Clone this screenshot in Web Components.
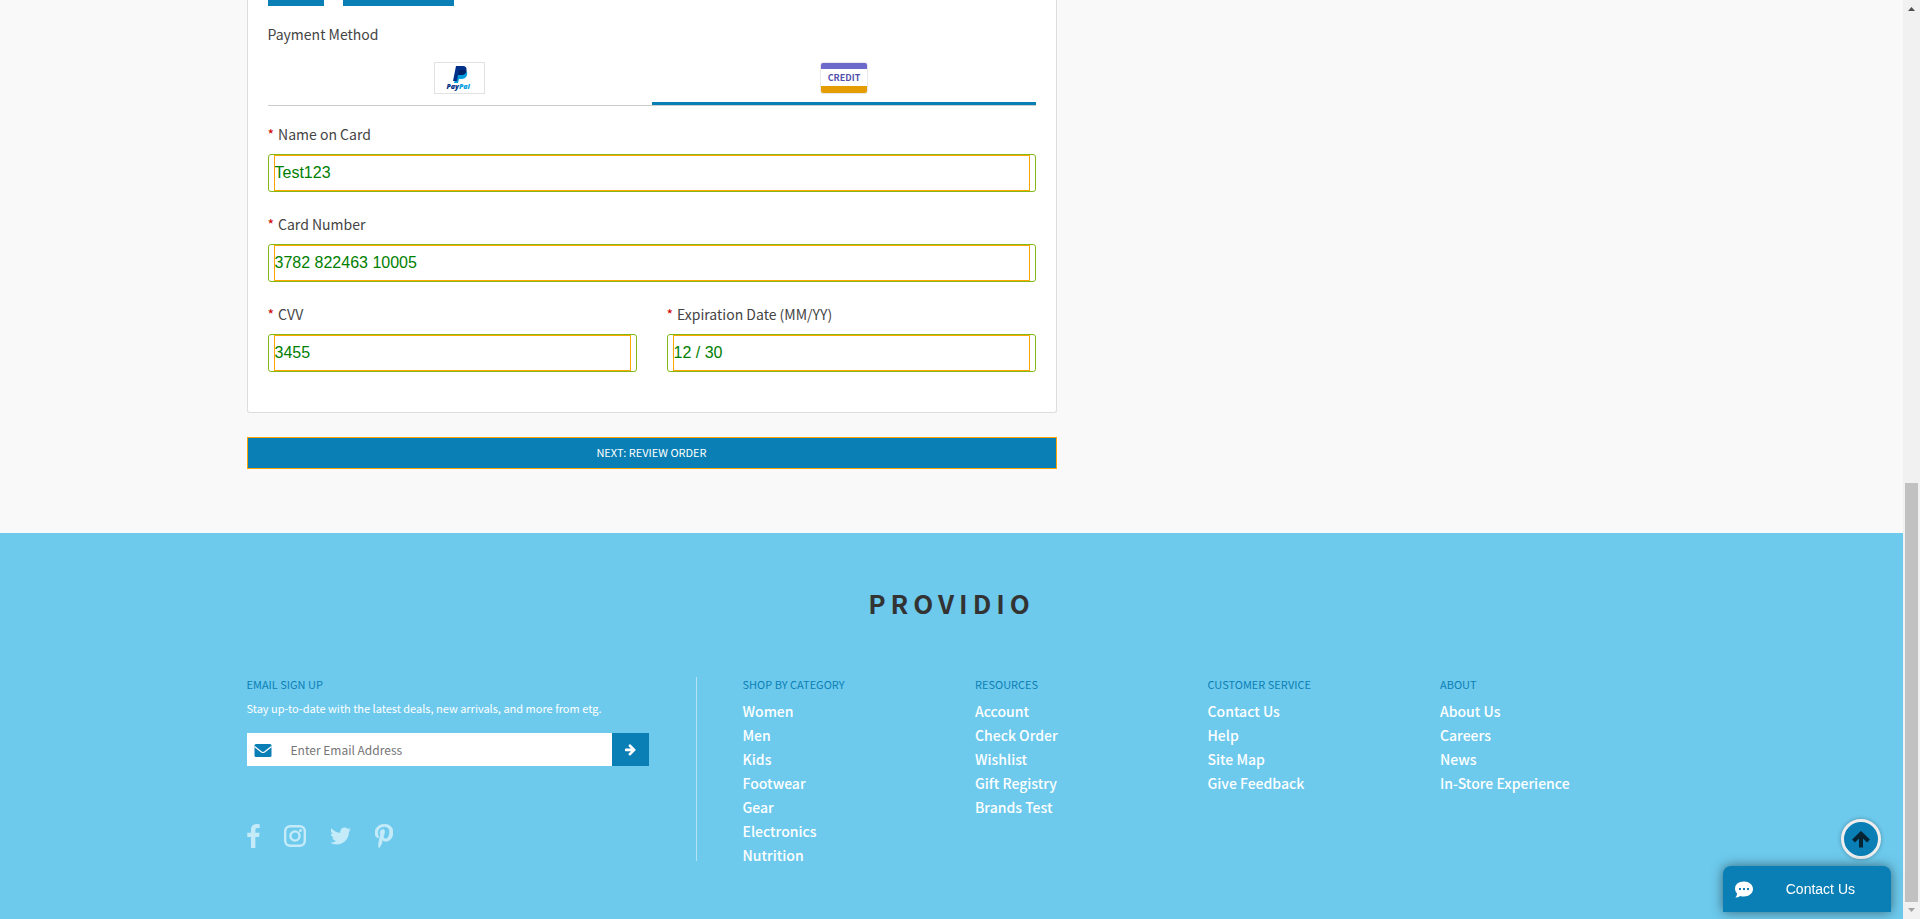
<!DOCTYPE html>
<html lang="en">
<head>
<meta charset="utf-8">
<title>Checkout | Providio</title>
<style>
  body {
    margin: 0;
    background: #f9f9f9;
    color: #444;
    font: 14px/20px "Noto Sans CJK SC", "Noto Sans", sans-serif;
  }
</style>
</head>
<body>
<checkout-page></checkout-page>

<script>
const define = (name, html, setup) => {
  const template = document.createElement('template');
  template.innerHTML = html;
  customElements.define(name, class extends HTMLElement {
    constructor() {
      super();
      this.attachShadow({ mode: 'open' }).append(template.content.cloneNode(true));
    }
    connectedCallback() {
      if (setup) setup(this, this.shadowRoot);
    }
  });
};

/* Labelled text field */
define('form-field', `
  <style>
    :host { display: block; }
    label { display: block; line-height: 20px; margin-bottom: 10px; }
    i { color: #c00; font-style: normal; margin-right: 4px; }
    .box { box-sizing: border-box; height: 38px; padding: 0 5px; border: 1px solid #83b817; border-radius: 3px; background: #fff; }
    input { box-sizing: border-box; display: block; width: 100%; height: 36px; margin: 0; padding: 0; border: 1px solid orange;
      background: none; color: green; font: 16px "Liberation Sans", Arial, sans-serif; outline: 0; }
  </style>
  <label for="input"><i>*</i><span></span></label>
  <div class="box"><input id="input" type="text" autocomplete="off"></div>`,
  (host, root) => {
    root.querySelector('span').textContent = host.getAttribute('label');
    root.querySelector('input').value = host.getAttribute('value');
  });

/* Payment method tabs */
define('payment-tabs', `
  <style>
    :host { display: block; }
    [role=tablist] { display: grid; grid-template-columns: 1fr 1fr; border-bottom: 1px solid #ccc; }
    button { height: 51px; margin: 0; padding: 0; border: 0; border-bottom: 3px solid transparent; background: none;
      display: flex; align-items: center; justify-content: center; cursor: pointer; }
    button[aria-selected=true] { border-color: #0a7fb5; }
    svg { display: block; }
  </style>
  <div role="tablist">
    <button type="button" role="tab" aria-selected="false" aria-label="PayPal">
      <svg width="51" height="32" viewBox="0 0 51 32">
        <rect x=".5" y=".5" width="50" height="31" fill="#fff" stroke="#e2e2e2"/>
        <path d="M24 8h7q3 2 2 5-1 4-6 4h-2l-1 4h-4z" fill="#009cde"/>
        <path d="M22 4h7q4 0 3.500 4.500Q31.500 13 26.500 13h-2.500l-1 6h-4z" fill="#003087"/>
        <path d="M25 8h6.500q1 0 .800 1.500-1 3.500-5.500 3.500h-2.500z" fill="#012169"/>
        <text x="12.500" y="27" font-family="Open Sans, sans-serif" font-size="7" font-weight="800" font-style="italic" fill="#003087">Pay<tspan fill="#009cde">Pal</tspan></text>
      </svg>
    </button>
    <button type="button" role="tab" aria-selected="true" aria-label="Credit card">
      <svg width="48" height="32" viewBox="0 0 48 32">
        <rect x=".5" y=".5" width="47" height="31" rx="2.500" fill="#fff" stroke="#e9e9e9"/>
        <path d="M1 7V3q0-2 2-2h42q2 0 2 2v4z" fill="#6c6bcb"/>
        <path d="M1 24v5q0 2 2 2h42q2 0 2-2v-5z" fill="#e59c00"/>
        <text x="24" y="19" text-anchor="middle" font-family="Noto Sans CJK SC, sans-serif" font-size="9" font-weight="700" fill="#5350ab">CREDIT</text>
      </svg>
    </button>
  </div>`);

/* Billing card with its submit button */
define('payment-form', `
  <style>
    :host { display: block; }
    .card { border: 1px solid #ddd; border-top: 0; border-radius: 0 0 3px 3px; background: #fff; padding: 0 20px 40px; }
    .actions { display: flex; gap: 19px; height: 6px; }
    .actions button { width: 56px; padding: 0; border: 0; background: #0a7fb5; }
    .actions button + button { width: 111px; }
    h2 { margin: 18px 0 10px; font: inherit; line-height: 20px; }
    .fields { display: grid; grid-template-columns: 1fr 1fr; gap: 22px 30px; margin-top: 18px; }
    .wide { grid-column: 1 / -1; }
    .next { display: block; width: 100%; height: 32px; margin-top: 24px; padding: 0 0 2px; border: 1px solid orange; background: #0a7fb5;
      color: #fff; font: 11px/20px "Noto Sans CJK SC", sans-serif; text-transform: uppercase; cursor: pointer; }
  </style>
  <form>
    <div class="card">
      <div class="actions"><button type="button" aria-label="Save"></button><button type="button" aria-label="Cancel"></button></div>
      <h2>Payment Method</h2>
      <payment-tabs></payment-tabs>
      <div class="fields">
        <form-field class="wide" label="Name on Card" value="Test123"></form-field>
        <form-field class="wide" label="Card Number" value="3782 822463 10005"></form-field>
        <form-field label="CVV" value="3455"></form-field>
        <form-field label="Expiration Date (MM/YY)" value="12 / 30"></form-field>
      </div>
    </div>
    <button class="next" type="button">Next: Review Order</button>
  </form>`);

/* Email sign up */
define('email-signup', `
  <style>
    :host { display: block; color: #fff; }
    h3 { margin: 0; color: #0a7fb5; font: 11px/14px "Noto Sans CJK SC", sans-serif; }
    p { margin: 9px 0 17px; font-size: 11px; line-height: 16px; }
    form { display: flex; height: 33px; background: #fff; }
    label { display: flex; flex: 1; align-items: center; padding-left: 7px; gap: 19px; }
    input { flex: 1; min-width: 0; padding: 0; border: 0; outline: 0; background: none; font: 12px/20px "Noto Sans CJK SC", sans-serif; }
    input::placeholder { color: #757575; }
    button { display: flex; align-items: center; justify-content: center; width: 37px; padding: 0; border: 0; background: #0a7fb5; cursor: pointer; }
    svg { display: block; }
  </style>
  <h3>EMAIL SIGN UP</h3>
  <p>Stay up-to-date with the latest deals, new arrivals, and more from etg.</p>
  <form>
    <label>
      <svg width="18" height="14" viewBox="0 0 18 14" aria-hidden="true">
        <path d="M2 1h14q1.500 0 1.500 1.500v10Q17.500 14 16 14H2Q.500 14 .500 12.500v-10Q.500 1 2 1z" fill="#0a7fb5"/>
        <path d="M.500 3.500 7.500 9q1.500 1 3 0l7-5.500" fill="none" stroke="#fff" stroke-width="1.200"/>
      </svg>
      <input type="email" placeholder="Enter Email Address" aria-label="Enter Email Address">
    </label>
    <button type="button" aria-label="Sign up">
      <svg width="13" height="13" viewBox="0 0 1792 1792"><path fill="#fff" d="M1600 960q0 54-37 91l-651 651q-39 37-91 37-51 0-90-37l-75-75q-38-38-38-91t38-91l293-293h-704q-52 0-84.500-37.500t-32.500-90.500v-128q0-53 32.500-90.500t84.500-37.500h704l-293-294q-38-36-38-90t38-90l75-75q38-38 90-38 53 0 91 38l651 651q37 35 37 90z"/></svg>
    </button>
  </form>`);

/* Social network links */
define('social-links', `
  <style>
    :host { display: flex; align-items: center; gap: 24px; height: 24px; }
    a { display: block; color: #c6ebf8; }
    svg { display: block; fill: currentColor; }
  </style>
  <a href="#" aria-label="Facebook"><svg width="13" height="24" viewBox="479 0 864 1664"><path d="M1343 12v264h-157q-86 0-116 36t-30 108v189h293l-39 296h-254v759h-306v-759h-255v-296h255v-218q0-186 104-288.500t277-102.500q147 0 228 12z"/></svg></a>
  <a href="#" aria-label="Instagram"><svg width="22" height="22" viewBox="0 0 22 22"><rect x="1.200" y="1.200" width="19.600" height="19.600" rx="5" fill="none" stroke="currentColor" stroke-width="2.400"/><circle cx="11" cy="11" r="4.600" fill="none" stroke="currentColor" stroke-width="2.400"/><circle cx="16.500" cy="5.500" r="1.500"/></svg></a>
  <a href="#" aria-label="Twitter"><svg width="21" height="20" viewBox="108 250 1576 1300"><path d="M1684 408q-67 98-162 167 1 14 1 42 0 130-38 259.500t-115.500 248.500-184.500 210.500-258 146-323 54.500q-271 0-496-145 35 4 78 4 225 0 401-138-105-2-188-64.500t-114-159.500q33 5 61 5 43 0 85-11-112-23-185.500-111.500t-73.500-205.500v-4q68 38 146 41-66-44-105-115t-39-154q0-88 44-163 121 149 294.500 238.500t371.500 99.500q-8-38-8-74 0-134 94.500-228.500t228.500-94.500q140 0 236 102 109-21 205-78-37 115-142 178 93-10 186-50z"/></svg></a>
  <a href="#" aria-label="Pinterest"><svg width="18" height="24" viewBox="0 0 384 512"><path stroke="currentColor" stroke-width="16" d="M204 6.500C101.400 6.500 0 74.900 0 185.600 0 256 39.600 296 63.600 296c9.900 0 15.600-27.600 15.600-35.400 0-9.300-23.700-29.100-23.700-67.800 0-80.400 61.200-137.400 140.400-137.400 68.100 0 118.500 38.700 118.500 109.800 0 53.100-21.300 152.700-90.300 152.700-24.900 0-46.200-18-46.200-43.800 0-37.800 26.400-74.400 26.400-113.400 0-66.200-93.900-54.200-93.900 25.800 0 16.800 2.100 35.400 9.600 50.700-13.800 59.400-42 147.900-42 209.100 0 18.900 2.700 37.500 4.500 56.400 3.400 3.800 1.700 3.400 6.900 1.500 50.400-69 48.600-82.500 71.400-172.800 12.300 23.400 44.100 36 69.300 36 106.200 0 153.900-103.500 153.900-196.800C384 71.300 298.200 6.500 204 6.500z"/></svg></a>`);

/* One titled column of footer links */
define('link-column', `
  <style>
    :host { display: block; }
    h3 { margin: 0 0 8px; color: #0a7fb5; font: 11px/14px "Noto Sans CJK SC", sans-serif; }
    ul { margin: 0 0 -6px; padding: 0; list-style: none; }
    li { line-height: 24px; }
    a { color: #fff; text-decoration: none; font-size: 14px; font-weight: 500; }
  </style>
  <h3></h3>
  <ul></ul>`,
  (host, root) => {
    root.querySelector('h3').textContent = host.getAttribute('heading');
    root.querySelector('ul').innerHTML = host.getAttribute('links').split('|')
      .map(text => `<li><a href="#">${text}</a></li>`).join('');
  });

define('site-footer', `
  <style>
    :host { display: block; background: #6dcaed; padding: 56px 15px; }
    h2 { margin: 0 0 60px; color: #333; font: 700 26px/28px "Noto Sans CJK SC", sans-serif; letter-spacing: 5px; text-align: center; }
    .row { display: grid; grid-template-columns: 450px 1fr; max-width: 1410px; margin: 0 auto; }
    .left { border-right: 1px solid #b3e2f5; padding-right: 47px; }
    social-links { margin-top: 58px; }
    nav { display: grid; grid-template-columns: repeat(4, 1fr); margin-right: -16px; padding-left: 46px; }
  </style>
  <h2>PROVIDIO</h2>
  <div class="row">
    <div class="left">
      <email-signup></email-signup>
      <social-links></social-links>
    </div>
    <nav aria-label="Footer">
      <link-column heading="SHOP BY CATEGORY" links="Women|Men|Kids|Footwear|Gear|Electronics|Nutrition"></link-column>
      <link-column heading="RESOURCES" links="Account|Check Order|Wishlist|Gift Registry|Brands Test"></link-column>
      <link-column heading="CUSTOMER SERVICE" links="Contact Us|Help|Site Map|Give Feedback"></link-column>
      <link-column heading="ABOUT" links="About Us|Careers|News|In-Store Experience"></link-column>
    </nav>
  </div>`);

/* Round button that returns to the top of the page */
define('back-to-top', `
  <style>
    :host { position: fixed; right: 39px; bottom: 60px; }
    button { box-sizing: border-box; display: flex; align-items: center; justify-content: center; width: 40px; height: 40px; padding: 0;
      border: 3px solid #eee; border-radius: 50%; background: #0a7fb5; box-shadow: 0 0 4px rgba(0,0,0,.3); cursor: pointer; }
    svg { display: block; }
  </style>
  <button type="button" aria-label="Back to top">
    <svg width="18" height="17" viewBox="0 0 18 17" fill="none" stroke="#062433" stroke-width="4"><path d="M9 16.500V4M1.500 10 9 2.700 16.500 10"/></svg>
  </button>`);

define('contact-launcher', `
  <style>
    :host { position: fixed; right: 29px; bottom: 7px; }
    button { display: flex; align-items: center; width: 168px; height: 46px; padding: 0 36px 0 12px; border: 0; border-radius: 8px 8px 0 0;
      justify-content: space-between; background: #0a7fb5; color: #fff; font: 14px/20px "Liberation Sans", Arial, sans-serif;
      box-shadow: 0 0 12px rgba(0,0,0,.5); cursor: pointer; }
    svg { display: block; }
  </style>
  <button type="button">
    <svg width="18" height="17" viewBox="0 0 18 17" aria-hidden="true"><path fill="#fff" d="M9 .500c5 0 9 3.300 9 7.500s-4 7.500-9 7.500q-2 0-3.700-.600-2 1.600-5 1.600 1.700-1.700 1.800-3.800Q0 10.500 0 8 0 .500 9 .500z"/><path d="M4 7h2v2H4zM8 7h2v2H8zM12 7h2v2h-2z" fill="#0a7fb5"/></svg>
    <span>Contact Us</span>
  </button>`);

/* Vertical scroll rail at the window's edge */
define('scroll-rail', `
  <style>
    :host { position: sticky; top: 0; display: flex; flex-direction: column; height: 100vh; background: #f1f1f1; }
    svg { display: block; flex: none; }
    .track { flex: 1; display: grid; grid-template-rows: 466fr 419fr; padding: 0 2px; }
    .thumb { grid-row: 2; background: #c1c1c1; }
  </style>
  <svg width="17" height="17"><path d="M5 11h7L8.500 7z" fill="#505050"/></svg>
  <div class="track"><div class="thumb"></div></div>
  <svg width="17" height="17"><path d="M5 6h7L8.500 10z" fill="#a3a3a3"/></svg>`);

define('checkout-page', `
  <style>
    :host { display: grid; grid-template-columns: minmax(0, 1fr) 17px; align-items: start; }
    .page { display: flex; flex-direction: column; min-height: 100vh; }
    main { box-sizing: border-box; width: 100%; max-width: 1440px; margin: 0 auto; padding: 0 15px 64px; }
    payment-form { max-width: 810px; }
    site-footer { flex: 1; }
  </style>
  <div class="page">
    <main><payment-form></payment-form></main>
    <site-footer></site-footer>
  </div>
  <scroll-rail aria-hidden="true"></scroll-rail>
  <back-to-top></back-to-top>
  <contact-launcher></contact-launcher>`);
</script>
</body>
</html>
